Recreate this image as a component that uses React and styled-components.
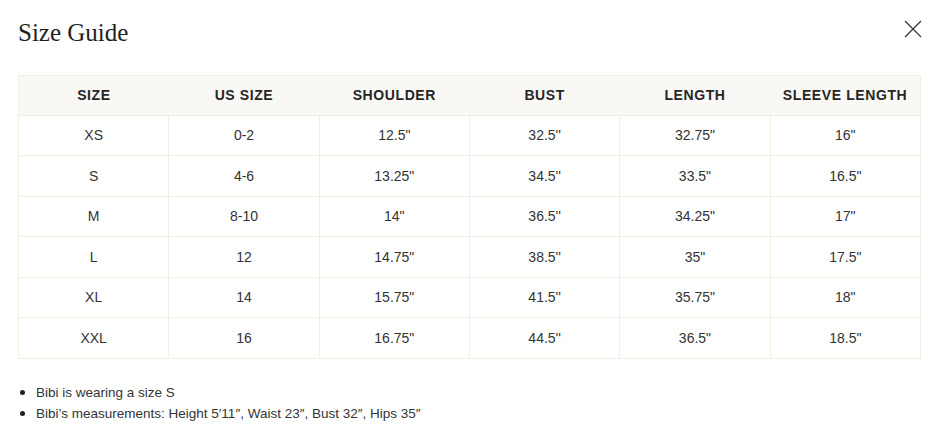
import React from "react";
import styled, { createGlobalStyle } from "styled-components";

const Global = createGlobalStyle`
  html, body { margin: 0; padding: 0; background: #fff; }
  body { font-family: "Liberation Sans", Arial, sans-serif; color: #2b2b2b; }
`;

const Modal = styled.div`
  width: 936px;
  box-sizing: border-box;
  padding: 18px 14px 0 18px;
`;

const Header = styled.div`
  display: flex;
  justify-content: space-between;
  align-items: flex-start;
  height: 57px;
`;

const Title = styled.h2`
  margin: 0;
  font-family: "Liberation Serif", "Times New Roman", serif;
  font-weight: 400;
  font-size: 25px;
  line-height: 30px;
  color: #1f1f1f;
`;

const Close = styled.button`
  width: 18px;
  height: 18px;
  padding: 0;
  margin-top: 2px;
  border: 0;
  background: none;
  cursor: pointer;
  display: flex;
  align-items: center;
  justify-content: center;
`;

const Table = styled.table`
  width: 903px;
  border-collapse: collapse;
  table-layout: fixed;
  border: 1px solid #f1eee4;
`;

const Th = styled.th`
  height: 38.5px;
  padding: 0;
  background: #f9f8f4;
  font-weight: 700;
  font-size: 14px;
  letter-spacing: 0.6px;
  text-transform: uppercase;
  color: #262626;
  text-align: center;
`;

const Td = styled.td`
  height: 39.5px;
  padding: 0;
  border: 1px solid #f1eee4;
  font-size: 14px;
  color: #333;
  text-align: center;
`;

const Notes = styled.ul`
  margin: 23px 0 0;
  padding-left: 18px;
  font-size: 13.5px;
  line-height: 20px;
  color: #333;
  li::marker { font-size: 16px; color: #222; }
`;

const cols = ["Size", "US Size", "Shoulder", "Bust", "Length", "Sleeve Length"];
const rows = [
  ["XS", "0-2", "12.5\"", "32.5''", "32.75\"", "16\""],
  ["S", "4-6", "13.25\"", "34.5''", "33.5\"", "16.5\""],
  ["M", "8-10", "14\"", "36.5''", "34.25\"", "17\""],
  ["L", "12", "14.75\"", "38.5''", "35\"", "17.5\""],
  ["XL", "14", "15.75\"", "41.5''", "35.75\"", "18\""],
  ["XXL", "16", "16.75\"", "44.5''", "36.5\"", "18.5\""],
];

export default function App() {
  return (
    <>
      <Global />
      <Modal>
        <Header>
          <Title>Size Guide</Title>
          <Close aria-label="Close">
            <svg width="18" height="18" viewBox="0 0 18 18">
              <path d="M1 1 L17 17 M17 1 L1 17" stroke="#333" strokeWidth="1.2" fill="none" />
            </svg>
          </Close>
        </Header>
        <Table>
          <thead>
            <tr>
              {cols.map((c) => (
                <Th key={c}>{c}</Th>
              ))}
            </tr>
          </thead>
          <tbody>
            {rows.map((r) => (
              <tr key={r[0]}>
                {r.map((v, i) => (
                  <Td key={i}>{v}</Td>
                ))}
              </tr>
            ))}
          </tbody>
        </Table>
        <Notes>
          <li>Bibi is wearing a size S</li>
          <li>Bibi’s measurements: Height 5′11″, Waist 23″, Bust 32″, Hips 35″</li>
        </Notes>
      </Modal>
    </>
  );
}
